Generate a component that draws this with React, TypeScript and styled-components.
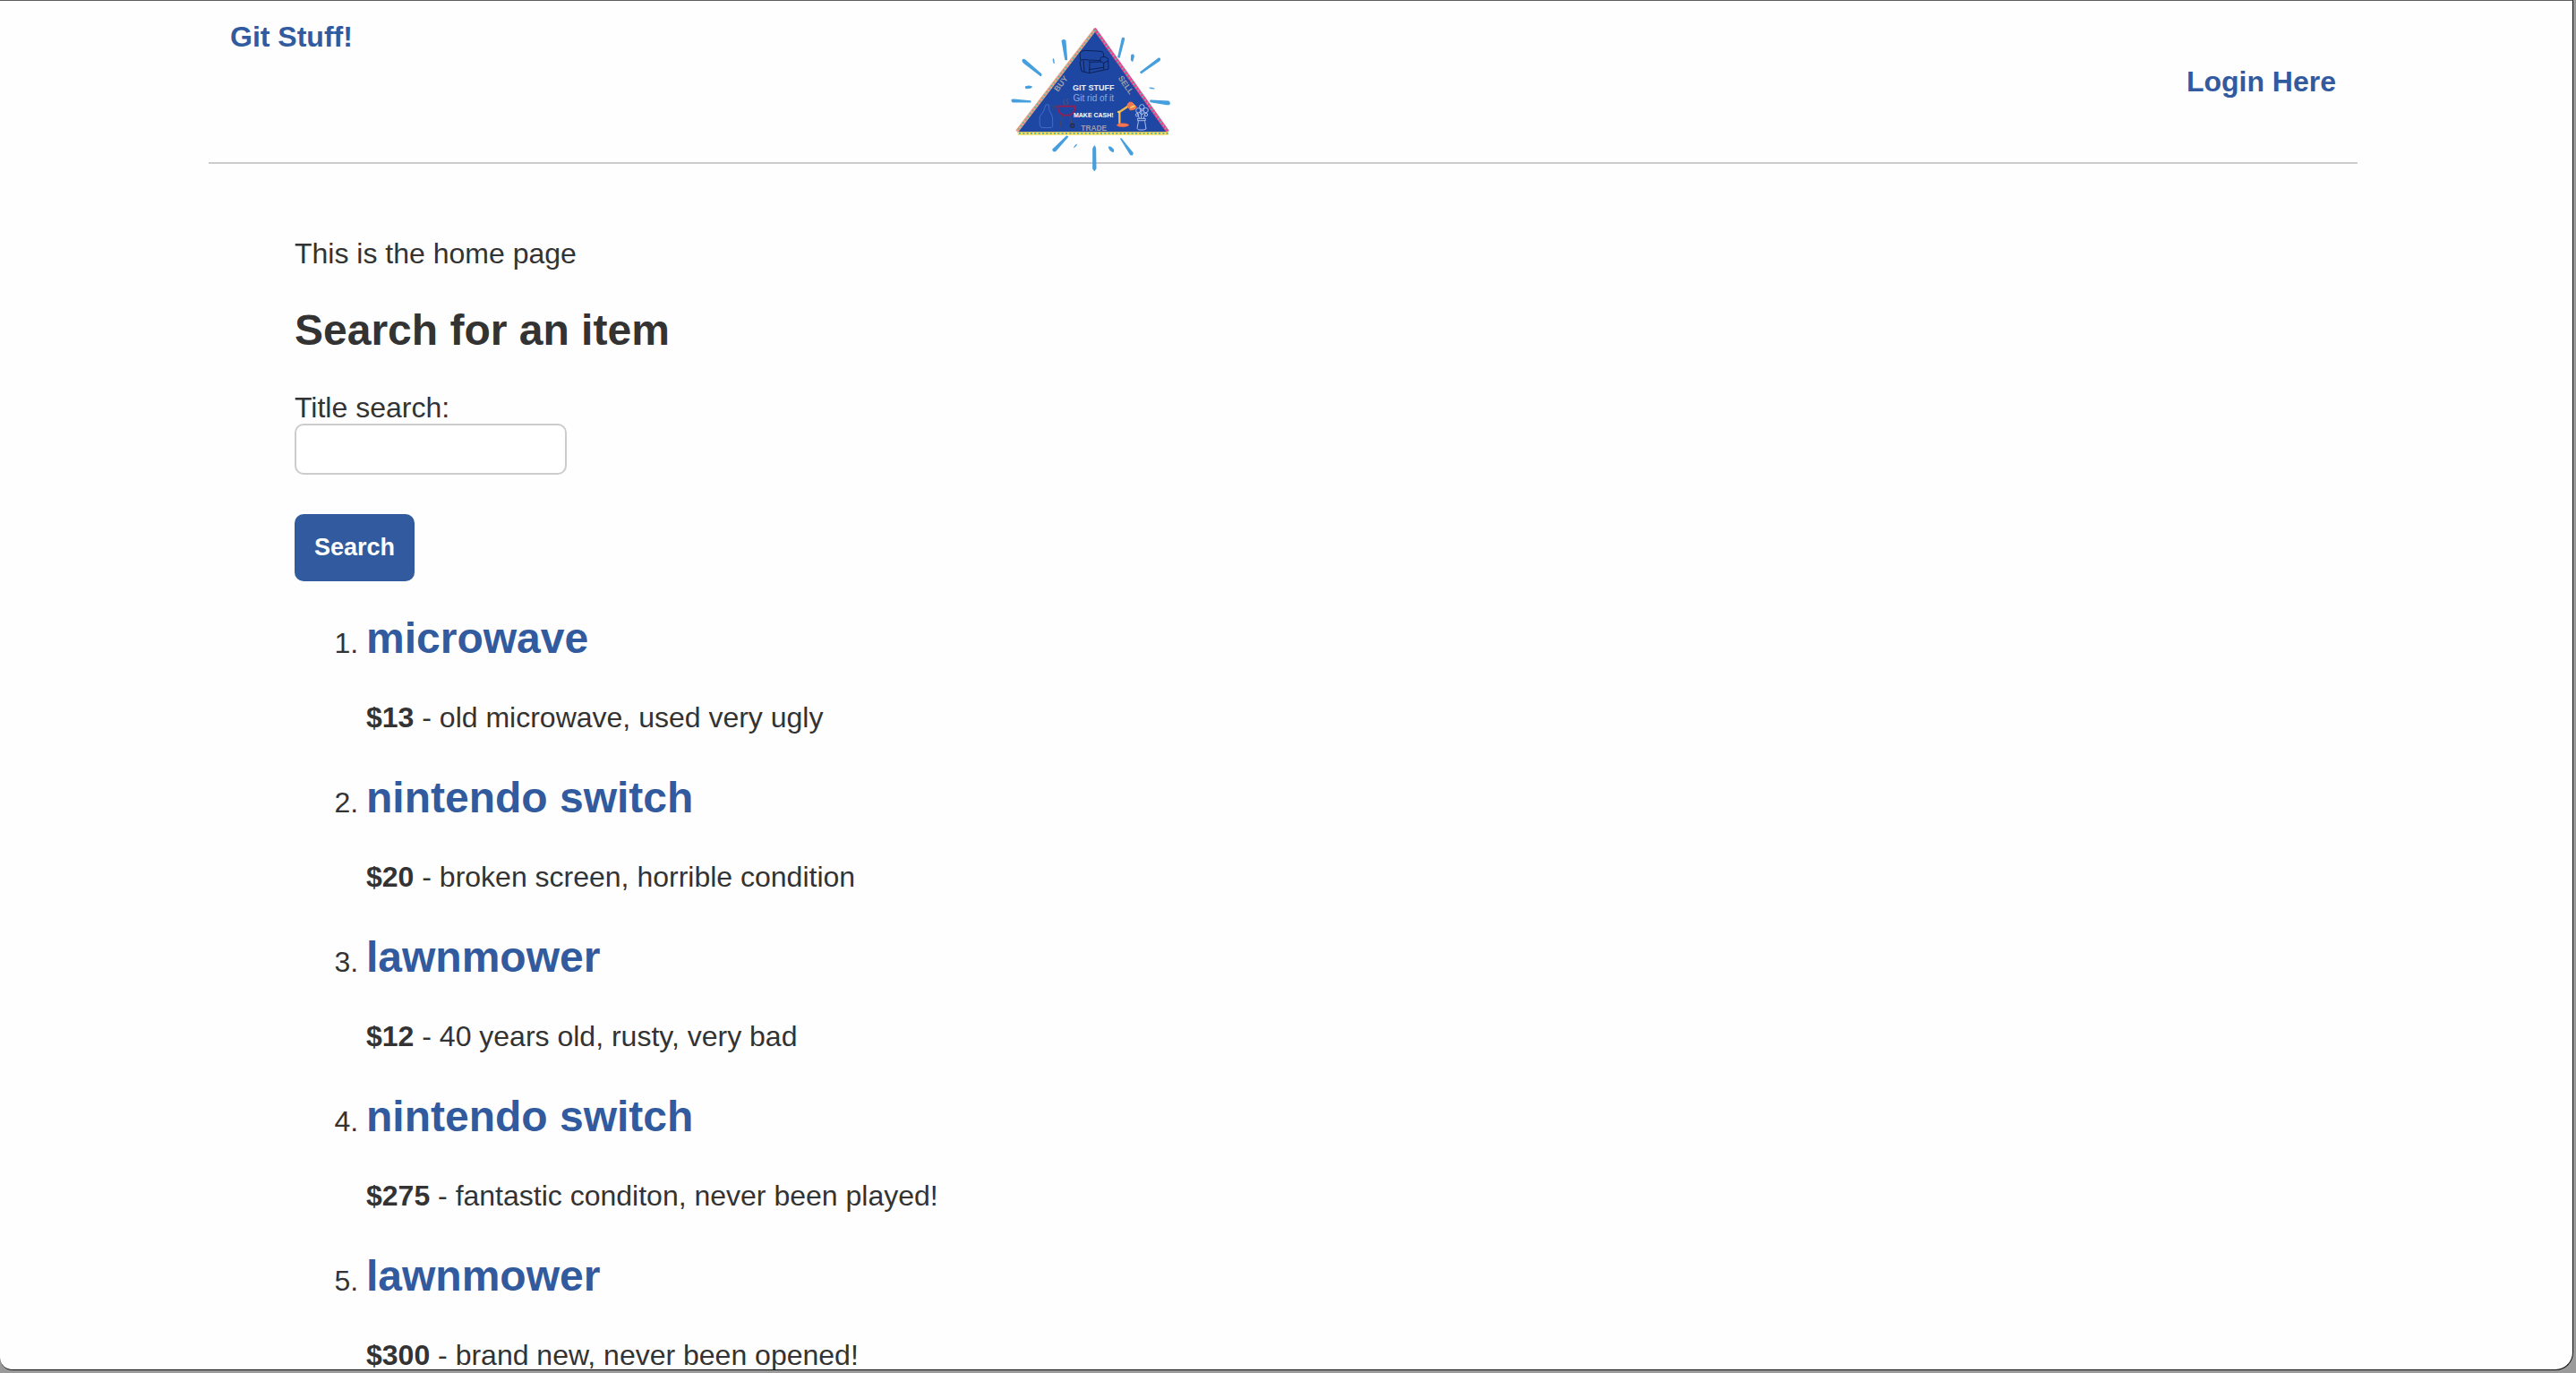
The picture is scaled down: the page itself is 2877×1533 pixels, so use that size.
import React from "react";
import styled, { createGlobalStyle } from "styled-components";

const GlobalStyle = createGlobalStyle`
  * { box-sizing: border-box; }
  body {
    margin: 0;
    background: #9a9a9a;
    color: #333;
    font-family: "Liberation Sans", Arial, Helvetica, sans-serif;
    font-size: 32px;
    line-height: 36px;
  }
`;

const Desktop = styled.div`
  height: 100vh;
  padding: 0 3px 3px 0;
`;

const BrowserWindow = styled.div`
  height: 100%;
  overflow: hidden;
  padding-right: 7px;
  background: #fefefe;
  border: 1px solid #111;
  border-top-color: #5f5e63;
  border-left: 0;
  border-radius: 0 0 20px 14px;
`;

const Page = styled.div`
  max-width: 2400px;
  margin: 0 auto;
`;

const Header = styled.header`
  display: grid;
  grid-template-columns: 2fr 220px 3fr;
  align-items: center;
  padding: 0 24px;
  border-bottom: 2px solid #ccc;
`;

const NavLink = styled.a`
  color: #315b9e;
  font-weight: bold;
  line-height: 32px;
  text-decoration: none;
`;

const BrandLink = styled(NavLink)`
  place-self: start;
  margin-top: 24px;
`;

const LoginLink = styled(NavLink)`
  justify-self: end;
`;

const LogoArt = styled.svg`
  display: block;
  width: 220px;
  height: 180px;
  overflow: visible;
`;

const Main = styled.main`
  padding: 82px 96px 0;
`;

const Intro = styled.p`
  margin: 0 0 40px;
`;

const Heading = styled.h2`
  margin: 0;
  font-size: 48px;
  line-height: 56px;
`;

const SearchForm = styled.form`
  display: flex;
  flex-direction: column;
  align-items: flex-start;
  margin: 40px 0 36px;
`;

const TextInput = styled.input`
  width: 304px;
  height: 57px;
  margin-bottom: 44px;
  padding: 8px 12px;
  background: #fff;
  border: 2px solid #ccc;
  border-radius: 10px;
  font: inherit;
`;

const SubmitButton = styled.button`
  padding: 22px;
  background: #315b9e;
  border: 0;
  border-radius: 10px;
  color: #fff;
  font: bold 27px/31px "Liberation Sans", Arial, sans-serif;
`;

const ItemList = styled.ol`
  margin: 0;
  padding-left: 80px;
`;

const Item = styled.li`
  margin-bottom: 44px;
`;

const ItemLink = styled.a`
  color: #315b9e;
  text-decoration: none;
`;

const Description = styled.p`
  margin: 42px 0 0;
`;

const items = [
  { title: "microwave", price: 13, text: "old microwave, used very ugly" },
  { title: "nintendo switch", price: 20, text: "broken screen, horrible condition" },
  { title: "lawnmower", price: 12, text: "40 years old, rusty, very bad" },
  { title: "nintendo switch", price: 275, text: "fantastic conditon, never been played!" },
  { title: "lawnmower", price: 300, text: "brand new, never been opened!" },
];

function Logo() {
  return (
    <LogoArt viewBox="0 -27 660 540" role="img" aria-label="Git Stuff logo">
      <g fill="#479fdd" stroke="#479fdd" strokeWidth="5" strokeLinejoin="round">
        <path d="M229 107q5-5 10 0l5 62h-4z" />
        <path d="M431 98q5-2 5 3l-16 61-3-2z" />
        <path d="M97 172q2-3 6-1l55 48-1 4-56-43q-5-3-4-8z" />
        <path d="M552 166q4-1 4 3l-2 4-60 41-2-2z" />
        <path d="M61 305l5-1 56 5v2l-58 0q-4-2-3-6z" />
        <path d="M525 307l60 3q5 4 2 9l-8 0-54-9z" />
        <path d="M107 261l10-2 9 2-5 3-13 1z" />
        <path d="M244 427l3 1-41 47q-6 3-8-4z" />
        <path d="M426 435l39 48-2 5-5-1z" />
        <path d="M337 460l3 7 1 68-4 5-4-5 0-67z" />
        <path d="M386 463l6 1 8 8-1 6-9-6z" />
        <path d="M462 155l5-1 1 5-4 15-3-4z" />
      </g>
      <g fill="#479fdd" stroke="#479fdd" strokeWidth="2" strokeLinejoin="round">
        <path d="M521 264l9 0 8 3-10 0z" />
        <path d="M198 167l3 1 1 15-3-7z" />
        <path d="M268 464q5-9 11-11l-6 8z" />
      </g>

      <path d="M339 70 79 413H583Z" fill="#1e46a3" />
      <g fill="none" strokeWidth="11">
        <path d="M341 66 77 410" stroke="#f0a080" />
        <path d="M337 66 583 411" stroke="#ee3f8b" />
        <path d="M80 417H584" stroke="#ffdd4c" />
      </g>
      <g fill="none" stroke="#62b5ad" strokeWidth="6" strokeDasharray="6 7">
        <path d="M339 70 77 410" />
        <path d="M339 70 583 411" />
        <path d="M84 417H584" />
      </g>

      {/* sofa */}
      <g fill="none" stroke="#0b2259" strokeWidth="3" strokeLinejoin="round">
        <path d="M290 170 288 148Q291 140 305 139L360 142Q369 144 368 161" />
        <path d="M288 179Q289 168 301 169L317 171Q322 173 321 182L320 215 294 209Z" />
        <path d="M321 178 359 177 356 166Q360 158 373 161L383 166 384 201 320 215" />
        <path d="M320 203 368 196M359 177 368 181 383 174M368 181V203M300 172 303 210M320 171 357 173" />
      </g>

      {/* milk bottle */}
      <path d="M174 321H184Q182 339 193 353Q198 360 197 394Q194 400 159 397Q151 395 154 360Q170 343 174 321Z" fill="none" stroke="#4c83d4" strokeWidth="2" />

      {/* barbecue grill */}
      <g fill="none" strokeLinecap="round">
        <path d="M235 305q-5 6 0 10t-2 9M247 301q-5 7 0 11t-3 10" stroke="#50577e" strokeWidth="3" />
        <path d="M213 326H272Q273 350 252 356H234Q215 350 213 326" stroke="#961f51" strokeWidth="5" />
        <path d="M229 358 221 397M255 358 261 386M211 326H200L197 336" stroke="#434765" strokeWidth="4" />
        <circle cx="263" cy="391" r="6" stroke="#2c2e49" strokeWidth="5" />
      </g>

      {/* desk lamp */}
      <g fill="none" strokeLinecap="round" strokeLinejoin="round">
        <path d="M421 383V345L457 321" stroke="#f6b64b" strokeWidth="7" />
        <path d="M447 323Q450 309 463 313L478 329Q476 337 458 339Z" fill="#ef7a52" stroke="#ef7a52" strokeWidth="3" />
        <path d="M459 330 471 325" stroke="#ffd461" strokeWidth="5" />
        <ellipse cx="432" cy="389" rx="20" ry="6" fill="#f47951" stroke="#d95b52" strokeWidth="2" />
        <circle cx="418" cy="345" r="4" fill="#ffd461" />
      </g>

      {/* vase of flowers */}
      <g fill="none" stroke="#a7bce9" strokeWidth="3">
        <path d="M481 367H508L506 377 510 402 502 405H485L480 400 484 378ZM482 374H508" />
        <path d="M487 366 480 347M494 366 495 337M502 366 508 347" />
        <circle cx="484" cy="340" r="8" />
        <circle cx="496" cy="328" r="8" />
        <circle cx="509" cy="339" r="8" />
        <circle cx="496" cy="346" r="7" />
        <circle cx="480" cy="355" r="5" />
        <circle cx="510" cy="354" r="5" />
      </g>

      <g textAnchor="middle" fontFamily="Liberation Sans, Arial, sans-serif">
        <text x="334" y="272" fill="#e9efff" fontSize="27" fontWeight="bold">GIT STUFF</text>
        <text x="334" y="309" fill="#91a9df" fontSize="30">Git rid of it</text>
        <text x="334" y="364" fill="#fff" fontSize="21" fontWeight="bold">MAKE CASH!</text>
        <text x="335" y="408" fill="#9fa0a4" fontSize="25" fontWeight="bold">TRADE</text>
        <text transform="translate(232 256) rotate(-53)" fill="#9fa0a4" fontSize="27" fontWeight="bold">BUY</text>
        <text transform="translate(435 260) rotate(55)" fill="#9fa0a4" fontSize="27" fontWeight="bold">SELL</text>
      </g>
    </LogoArt>
  );
}

export default function App() {
  return (
    <Desktop>
      <GlobalStyle />
      <BrowserWindow>
        <Page>
          <Header>
            <BrandLink href="#home">Git Stuff!</BrandLink>
            <Logo />
            <LoginLink href="#login">Login Here</LoginLink>
          </Header>
          <Main>
            <Intro>This is the home page</Intro>
            <Heading>Search for an item</Heading>
            <SearchForm onSubmit={(event) => event.preventDefault()}>
              <label htmlFor="title-search">Title search:</label>
              <TextInput id="title-search" name="title" type="text" />
              <SubmitButton type="submit">Search</SubmitButton>
            </SearchForm>
            <ItemList>
              {items.map((item, index) => (
                <Item key={index}>
                  <Heading>
                    <ItemLink href={`#item-${index + 1}`}>{item.title}</ItemLink>
                  </Heading>
                  <Description>
                    <strong>${item.price}</strong> - {item.text}
                  </Description>
                </Item>
              ))}
            </ItemList>
          </Main>
        </Page>
      </BrowserWindow>
    </Desktop>
  );
}
